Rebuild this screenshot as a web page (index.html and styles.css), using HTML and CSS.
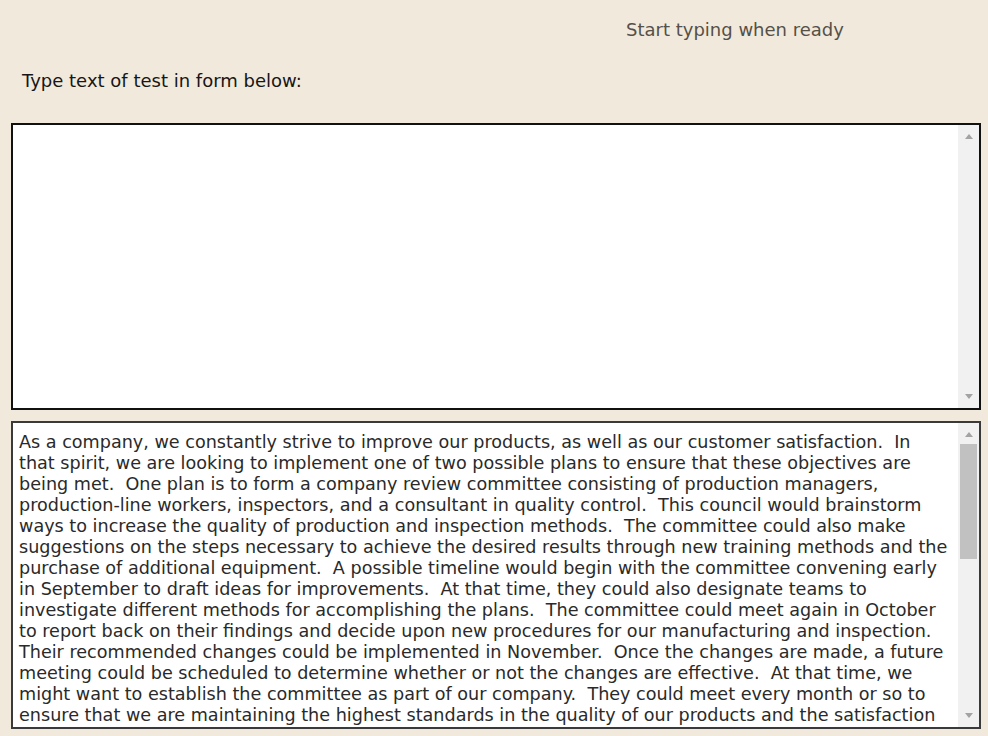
FILE: index.html
```html
<!DOCTYPE html>
<html>
<head>
<meta charset="utf-8">
<link rel="stylesheet" href="styles.css">
</head>
<body>
<div class="page">
  <div class="status">Start typing when ready</div>
  <div class="label">Type text of test in form below:</div>
  <div class="box box-input">
    <textarea class="input"></textarea>
    <div class="scrollbar">
      <div class="btn up"></div>
      <div class="track"></div>
      <div class="btn down"></div>
    </div>
  </div>
  <div class="box box-source">
    <div class="source">As a company, we constantly strive to improve our products, as well as our customer satisfaction.  In
that spirit, we are looking to implement one of two possible plans to ensure that these objectives are
being met.  One plan is to form a company review committee consisting of production managers,
production-line workers, inspectors, and a consultant in quality control.  This council would brainstorm
ways to increase the quality of production and inspection methods.  The committee could also make
suggestions on the steps necessary to achieve the desired results through new training methods and the
purchase of additional equipment.  A possible timeline would begin with the committee convening early
in September to draft ideas for improvements.  At that time, they could also designate teams to
investigate different methods for accomplishing the plans.  The committee could meet again in October
to report back on their findings and decide upon new procedures for our manufacturing and inspection.
Their recommended changes could be implemented in November.  Once the changes are made, a future
meeting could be scheduled to determine whether or not the changes are effective.  At that time, we
might want to establish the committee as part of our company.  They could meet every month or so to
ensure that we are maintaining the highest standards in the quality of our products and the satisfaction
of our customers.  The other plan is to hire an outside consulting firm to evaluate our current procedures</div>
    <div class="scrollbar">
      <div class="btn up"></div>
      <div class="track"><div class="thumb"></div></div>
      <div class="btn down"></div>
    </div>
  </div>
</div>
</body>
</html>
```
FILE: styles.css
```css
html, body {
  margin: 0;
  padding: 0;
  background: #f1e9db;
  overflow: hidden;
}
.page {
  width: 988px;
  height: 736px;
  display: flex;
  flex-direction: column;
  padding: 0 7px 0 11px;
  box-sizing: border-box;
  font-family: "DejaVu Sans", Verdana, sans-serif;
}
.status {
  align-self: flex-start;
  margin: 19px 0 0 615px;
  font-size: 18px;
  line-height: 21px;
  color: #555048;
}
.label {
  margin: 30px 0 0 11px;
  font-size: 18px;
  line-height: 21px;
  color: #161616;
}
.box {
  display: flex;
  width: 970px;
  box-sizing: border-box;
  background: #fff;
  overflow: hidden;
}
.box-input {
  margin-top: 32px;
  height: 287px;
  border: 2px solid #111;
}
.box-source {
  margin-top: 11px;
  height: 308px;
  border: 2px solid #3a3a3a;
}
.input {
  flex: 1;
  display: block;
  border: none;
  resize: none;
  background: #fff;
  font-family: "DejaVu Sans", Verdana, sans-serif;
  font-size: 17.6px;
  line-height: 21px;
  color: #2a2a2a;
  padding: 9px 6px;
  margin: 0;
  outline: none;
}
.source {
  flex: 1;
  overflow: hidden;
  white-space: pre;
  font-size: 17.6px;
  line-height: 21px;
  color: #2a2a2a;
  padding: 9px 0 0 6px;
}
.scrollbar {
  width: 21px;
  flex: none;
  display: flex;
  flex-direction: column;
  background: #f1f1f1;
}
.btn {
  height: 21px;
  flex: none;
  display: flex;
  justify-content: center;
}
.btn.up {
  align-items: flex-start;
}
.btn.down {
  align-items: flex-end;
}
.btn.up::before {
  content: "";
  margin-top: 9px;
  border-left: 4.5px solid transparent;
  border-right: 4.5px solid transparent;
  border-bottom: 5px solid #a3a3a3;
}
.btn.down::before {
  content: "";
  margin-bottom: 9px;
  border-left: 4.5px solid transparent;
  border-right: 4.5px solid transparent;
  border-top: 5px solid #a3a3a3;
}
.track {
  flex: 1;
  padding: 0 2px;
}
.thumb {
  height: 115px;
  background: #c1c1c1;
}
```
